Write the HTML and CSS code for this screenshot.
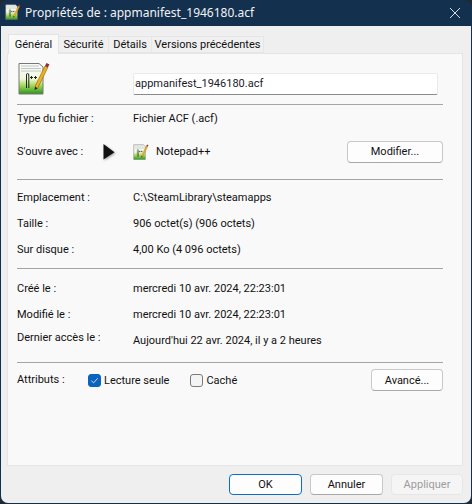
FILE: index.html
```html
<!DOCTYPE html>
<html lang="fr">
<head>
<meta charset="utf-8">
<title>Propriétés de : appmanifest_1946180.acf</title>
<link rel="stylesheet" href="styles.css">
</head>
<body>
<div class="window">
  <header class="titlebar">
    <svg class="title-icon" viewBox="0 0 32 33"><use href="#npp"/></svg>
    <span class="title-text">Propriétés de : appmanifest_1946180.acf</span>
    <svg class="close" viewBox="0 0 10 10"><path d="M0 0L10 10M10 0L0 10"/></svg>
  </header>
  <main class="content">
    <nav class="tabs">
      <span class="tab active">Général</span>
      <span class="tab tab-sec">Sécurité</span>
      <span class="tab tab-det">Détails</span>
      <span class="tab tab-ver">Versions précédentes</span>
    </nav>
    <section class="panel">
      <div class="head">
        <svg class="file-icon" viewBox="0 0 32 33"><use href="#npp"/></svg>
        <div class="name-input">appmanifest_1946180.acf</div>
      </div>
      <hr class="sep">
      <div class="group g-type">
        <div class="row r-type"><span class="label">Type du fichier :</span><span class="value">Fichier ACF (.acf)</span></div>
        <div class="row r-open">
          <span class="label">S'ouvre avec :</span>
          <span class="value open-value">
            <svg class="app-icon" viewBox="0 0 32 33"><use href="#npp"/></svg>
            <span>Notepad++</span>
          </span>
          <button class="btn btn-mod">Modifier...</button>
        </div>
      </div>
      <hr class="sep">
      <div class="group g-info">
        <div class="row"><span class="label">Emplacement :</span><span class="value">C:\SteamLibrary\steamapps</span></div>
        <div class="row"><span class="label">Taille :</span><span class="value">906 octet(s) (906 octets)</span></div>
        <div class="row"><span class="label">Sur disque :</span><span class="value">4,00 Ko (4 096 octets)</span></div>
      </div>
      <hr class="sep">
      <div class="group g-info g-dates">
        <div class="row"><span class="label">Créé le :</span><span class="value">mercredi 10 avr. 2024, 22:23:01</span></div>
        <div class="row"><span class="label">Modifié le :</span><span class="value">mercredi 10 avr. 2024, 22:23:01</span></div>
        <div class="row"><span class="label label-up">Dernier accès le :</span><span class="value">Aujourd'hui 22 avr. 2024, il y a 2 heures</span></div>
      </div>
      <hr class="sep">
      <div class="row r-attr">
        <span class="label attr-label">Attributs :</span>
        <span class="check-wrap">
          <span class="check on"><svg viewBox="0 0 10 10"><path d="M1.5 5.3L4 7.6L8.5 2.6"/></svg></span>
          <span>Lecture seule</span>
        </span>
        <span class="check-wrap hidden-attr">
          <span class="check"></span>
          <span>Caché</span>
        </span>
        <button class="btn btn-adv">Avancé...</button>
      </div>
    </section>
    <footer class="footer">
      <button class="btn btn-foot btn-ok">OK</button>
      <button class="btn btn-foot">Annuler</button>
      <button class="btn btn-foot btn-off">Appliquer</button>
    </footer>
  </main>
  <svg class="cursor" viewBox="0 0 12 16"><path d="M0.5 0L11.500 8.200L0.500 15.500Z"/></svg>
</div>
<svg class="defs" width="0" height="0">
  <defs>
    <linearGradient id="nppg" x1="0" y1="0" x2="0" y2="1">
      <stop offset="0" stop-color="#fbfbf6"/>
      <stop offset=".5" stop-color="#f2f8e2"/>
      <stop offset=".72" stop-color="#a5d85a"/>
      <stop offset="1" stop-color="#2e9420"/>
    </linearGradient>
    <g id="npp">
      <path d="M1 1.500H21L25 5V32H1Z" fill="url(#nppg)" stroke="#77786f"/>
      <path d="M3 4H21M3 6.500H23M3 9H23" stroke="#b6c0c8" stroke-width=".9"/>
      <path d="M8.500 26V13Q8.500 11.500 9.500 11.500Q10.800 11.500 10.800 13V26" fill="none" stroke="#1c2a1c" stroke-width="1"/>
      <path d="M12 15.500H15M13.500 14V17M16 15.500H19M17.500 14V17" stroke="#1c2a1c" stroke-width="1"/>
      <path d="M17 24.500L27 4L29.800 5.400L19.500 26.500Z" fill="#eeb325" stroke="#96680f" stroke-width=".7"/>
      <path d="M27 4L28.500 1L31.500 2.500L29.800 5.400Z" fill="#8b2f3a"/>
      <path d="M17 24.500L16.600 28L19.500 26.500Z" fill="#222"/>
    </g>
  </defs>
</svg>
</body>
</html>
```
FILE: styles.css
```css
* { box-sizing: border-box; }
html, body { margin: 0; height: 100%; background: #23282e; }
body { font-family: Roboto, "Noto Sans", sans-serif; font-size: 11px; color: #111; }
.window {
  position: relative;
  width: 472px;
  height: 504px;
  display: flex;
  flex-direction: column;
  background: #14304f;
  border-radius: 8px;
  overflow: hidden;
  padding: 0 1px 1px;
}
.titlebar {
  height: 26px;
  flex: none;
  display: flex;
  align-items: center;
  padding: 0 10px 0 4px;
  color: #f1f3f5;
  font-family: "Noto Sans", sans-serif;
  font-size: 12px;
}
.title-icon { width: 16px; height: 16px; flex: none; margin-top: -2px; }
.title-text { margin-left: 4px; margin-top: -1px; }
.close { width: 10px; height: 10px; margin-left: auto; margin-right: 1px; }
.close path { stroke: #eef1f4; stroke-width: .9; fill: none; }
.content {
  flex: 1;
  display: flex;
  flex-direction: column;
  background: #efefef;
  border-radius: 0 0 7px 7px;
  padding: 8px 8px 0 6px;
  min-height: 0;
}
.tabs { display: flex; align-items: flex-end; height: 19px; position: relative; z-index: 1; padding-left: 1px; }
.tab {
  height: 17px;
  display: flex;
  align-items: center;
  justify-content: center;
  background: #f0f0f0;
  border: 1px solid #e6e6e6;
  border-left: 0;
  white-space: nowrap;
}
.tab.active {
  width: 51px;
  height: 20px;
  background: #f9f9f9;
  border: 1px solid #e4e4e4;
  border-bottom: 0;
  margin-bottom: -1px;
}
.tab-sec { width: 50px; }
.tab-det { width: 43px; }
.tab-ver { width: 112px; }
.panel {
  width: 456px;
  height: 413px;
  flex: none;
  background: #f9f9f9;
  border: 1px solid #e5e5e5;
  padding: 0 19px 0 9px;
  display: flex;
  flex-direction: column;
}
.head { height: 50px; flex: none; display: flex; align-items: flex-start; }
.file-icon { width: 32px; height: 33px; flex: none; margin: 8px 0 0 1px; }
.name-input {
  width: 305px;
  height: 22px;
  margin: 19px 0 0 83px;
  background: #fff;
  border: 1px solid #eaeaea;
  border-bottom: 1px solid #8a8a8a;
  border-radius: 2px;
  padding: 0 1px;
  line-height: 20px;
  color: #1a1a2a;
}
.sep { width: 100%; height: 1px; flex: none; margin: 0; border: 0; background: #a5a5a5; }
.group { flex: none; display: flex; flex-direction: column; }
.row { display: flex; align-items: center; }
.label { width: 116px; flex: none; }
.label-up { margin-top: -6px; }
.g-type { height: 74px; }
.r-type { height: 26px; }
.r-open { height: 40px; padding-top: 1px; }
.open-value { display: flex; align-items: center; }
.app-icon { width: 16px; height: 16px; margin-right: 7px; }
.btn {
  font: inherit;
  color: #111;
  height: 22px;
  background: #fdfdfd;
  border: 1px solid #c8c8c8;
  border-bottom-color: #a8a8a8;
  border-radius: 4px;
  padding: 0;
}
.btn-mod { width: 96px; margin-left: auto; }
.g-info { height: 88px; padding-top: 4px; }
.g-info .row { height: 26px; }
.g-dates { height: 93px; padding-top: 6px; }
.r-attr { flex: none; margin-top: 6px; height: 22px; }
.attr-label { width: 71px; margin-top: -1px; }
.check-wrap { display: flex; align-items: center; gap: 3px; }
.check {
  width: 13px;
  height: 13px;
  border: 1px solid #7a7a7a;
  border-radius: 3px;
  background: #f4f4f4;
  display: block;
}
.check.on { background: #0a63bd; border-color: #0a63bd; display: flex; align-items: center; justify-content: center; }
.check svg { width: 9px; height: 9px; }
.check path { fill: none; stroke: #dfe9f5; stroke-width: 1; }
.hidden-attr { margin-left: 21px; }
.btn-adv { width: 72px; margin-left: auto; }
.footer { flex: 1; display: flex; justify-content: flex-end; gap: 8px; padding-top: 8px; margin-right: 0; }
.btn-foot { width: 73px; height: 21px; }
.btn-ok { border: 1px solid #0a6fc4; }
.btn-off { color: #9c9c9c; background: #f5f5f5; border-color: #e6e6e6; width: 72px; }
.cursor { position: absolute; left: 103px; top: 144px; width: 12px; height: 16px; filter: drop-shadow(1px 1px 1px rgba(0,0,0,.35)); }
.cursor path { fill: #111; }
.defs { position: absolute; }
```
